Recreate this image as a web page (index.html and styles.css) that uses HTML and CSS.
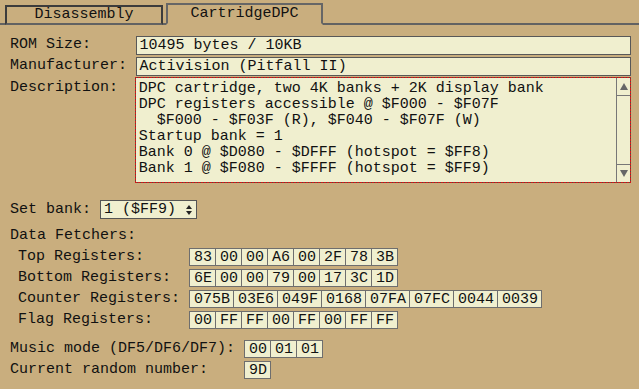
FILE: index.html
```html
<!DOCTYPE html>
<html>
  <head>
    <meta charset="utf-8" />
    <title>CartridgeDPC</title>
    <link rel="stylesheet" href="styles.css">
  </head>
  <body>
    <div class="tabs">
      <div class="tab">Disassembly</div>
      <div class="tab active">CartridgeDPC</div>
    </div>

    <div class="panel">
      <div class="field">
        <span class="label">ROM Size:</span>
        <div class="box">10495 bytes / 10KB</div>
      </div>
      <div class="field gap2">
        <span class="label">Manufacturer:</span>
        <div class="box">Activision (Pitfall II)</div>
      </div>
      <div class="field desc-row">
        <span class="label">Description:</span>
        <div class="desc">
          <div class="desc-text">DPC cartridge, two 4K banks + 2K display bank
DPC registers accessible @ $F000 - $F07F
  $F000 - $F03F (R), $F040 - $F07F (W)
Startup bank = 1
Bank 0 @ $D080 - $DFFF (hotspot = $FF8)
Bank 1 @ $F080 - $FFFF (hotspot = $FF9)</div>
          <div class="scrollbar">
            <div class="scroll-btn up"><span class="tri-up"></span></div>
            <div class="scroll-btn down"><span class="tri-down"></span></div>
          </div>
        </div>
      </div>

      <div class="bank-row">
        <span class="bank-label">Set bank:</span>
        <div class="select">
          <span>1 ($FF9)</span>
          <svg width="6" height="10" viewBox="0 0 6 10">
            <path d="M3 0 L6 4 L0 4 Z M0 6 L6 6 L3 10 Z" fill="#222" />
          </svg>
        </div>
      </div>

      <div class="section">Data Fetchers:</div>

      <div class="reg-row first">
        <span class="reg-label">Top Registers:</span>
        <div class="cells">
          <span class="cell">83</span><span class="cell">00</span><span class="cell">00</span><span class="cell">A6</span><span class="cell">00</span><span class="cell">2F</span><span class="cell">78</span><span class="cell">3B</span>
        </div>
      </div>
      <div class="reg-row">
        <span class="reg-label">Bottom Registers:</span>
        <div class="cells">
          <span class="cell">6E</span><span class="cell">00</span><span class="cell">00</span><span class="cell">79</span><span class="cell">00</span><span class="cell">17</span><span class="cell">3C</span><span class="cell">1D</span>
        </div>
      </div>
      <div class="reg-row">
        <span class="reg-label">Counter Registers:</span>
        <div class="cells">
          <span class="cell">075B</span><span class="cell">03E6</span><span class="cell">049F</span><span class="cell">0168</span><span class="cell">07FA</span><span class="cell">07FC</span><span class="cell">0044</span><span class="cell">0039</span>
        </div>
      </div>
      <div class="reg-row">
        <span class="reg-label">Flag Registers:</span>
        <div class="cells">
          <span class="cell">00</span><span class="cell">FF</span><span class="cell">FF</span><span class="cell">00</span><span class="cell">FF</span><span class="cell">00</span><span class="cell">FF</span><span class="cell">FF</span>
        </div>
      </div>

      <div class="misc-row music">
        <span class="misc-label">Music mode (DF5/DF6/DF7):</span>
        <div class="cells">
          <span class="cell">00</span><span class="cell">01</span><span class="cell">01</span>
        </div>
      </div>
      <div class="misc-row">
        <span class="misc-label">Current random number:</span>
        <div class="cells">
          <span class="cell">9D</span>
        </div>
      </div>
    </div>
  </body>
</html>
```

FILE: styles.css
```css
body {
  margin: 0;
  padding: 0;
  background-color: #c9ae7e;
  color: #111;
  font-family: "Liberation Mono", "DejaVu Sans Mono", monospace;
  font-size: 15px;
  line-height: 16px;
}

/* Tab bar */
.tabs {
  display: flex;
  align-items: flex-end;
  height: 23px;
  border-bottom: 2px solid #626262;
}

.tab {
  width: 154px;
  height: 16px;
  margin-left: 5px;
  margin-bottom: -2px;
  border: 2px solid #3c3c3c;
  border-bottom-color: #626262;
  text-align: center;
  line-height: 16px;
}

.tab.active {
  width: 153px;
  height: 18px;
  margin-left: 3px;
  border-color: #666;
  border-bottom-color: #c9ae7e;
  line-height: 17px;
}

/* Info fields */
.panel {
  padding: 11px 8px 0 10px;
}

.field {
  display: flex;
  align-items: flex-start;
}

.gap2 {
  margin-top: 2px;
}

.label {
  width: 126px;
  line-height: 18px;
}

.box {
  width: 492px;
  height: 17px;
  padding-left: 3px;
  border: 1px solid #585858;
  background-color: #f0efcf;
  line-height: 18px;
  white-space: pre;
}

.desc-row {
  margin-top: 1px;
}

.desc-row .label {
  margin-top: 2px;
}

/* focus frame: short red dashes on a dark line */
.desc {
  display: flex;
  width: 495px;
  height: 104px;
  margin-left: -1px;
  padding: 1px;
  background:
    repeating-linear-gradient(90deg, #d01818 0 2px, #5a4a3a 2px 3px) top / 100% 1px no-repeat,
    repeating-linear-gradient(90deg, #d01818 0 2px, #5a4a3a 2px 3px) bottom / 100% 1px no-repeat,
    repeating-linear-gradient(0deg, #d01818 0 2px, #5a4a3a 2px 3px) left / 1px 100% no-repeat,
    repeating-linear-gradient(0deg, #d01818 0 2px, #5a4a3a 2px 3px) right / 1px 100% no-repeat,
    #f0efcf;
  overflow: hidden;
}

.desc-text {
  flex: 1;
  padding: 3px 0 0 3px;
  white-space: pre;
  overflow: hidden;
}

.scrollbar {
  display: flex;
  flex-direction: column;
  justify-content: space-between;
  width: 13px;
  border-left: 1px solid #777;
}

.scroll-btn {
  display: flex;
  align-items: center;
  justify-content: center;
  height: 17px;
}

.scroll-btn.up {
  border-bottom: 1px solid #777;
}

.scroll-btn.down {
  border-top: 1px solid #777;
}

.tri-up,
.tri-down {
  width: 0;
  height: 0;
  border-left: 4px solid transparent;
  border-right: 4px solid transparent;
}

.tri-up {
  border-bottom: 7px solid #666;
}

.tri-down {
  border-top: 7px solid #666;
}

/* Bank selector */
.bank-row {
  display: flex;
  align-items: center;
  margin-top: 17px;
}

.bank-label {
  width: 90px;
}

.select {
  display: flex;
  align-items: center;
  justify-content: space-between;
  width: 88px;
  height: 17px;
  padding: 0 4px 0 3px;
  border: 1px solid #555;
  background-color: #f0efcf;
  line-height: 18px;
}

/* Data fetchers */
.section {
  margin-top: 9px;
}

.reg-row,
.misc-row {
  display: flex;
  align-items: center;
  margin-top: 3px;
}

.reg-row.first {
  margin-top: 4px;
}

.reg-label {
  width: 171px;
  padding-left: 8px;
}

.misc-label {
  width: 234px;
}

.misc-row.music {
  margin-top: 11px;
}

.cells {
  display: flex;
}

.cell {
  height: 16px;
  padding: 0 3px 0 4px;
  margin-right: -1px;
  border: 1px solid #6e6e6e;
  background-color: #f0efcf;
  line-height: 17px;
}
```
